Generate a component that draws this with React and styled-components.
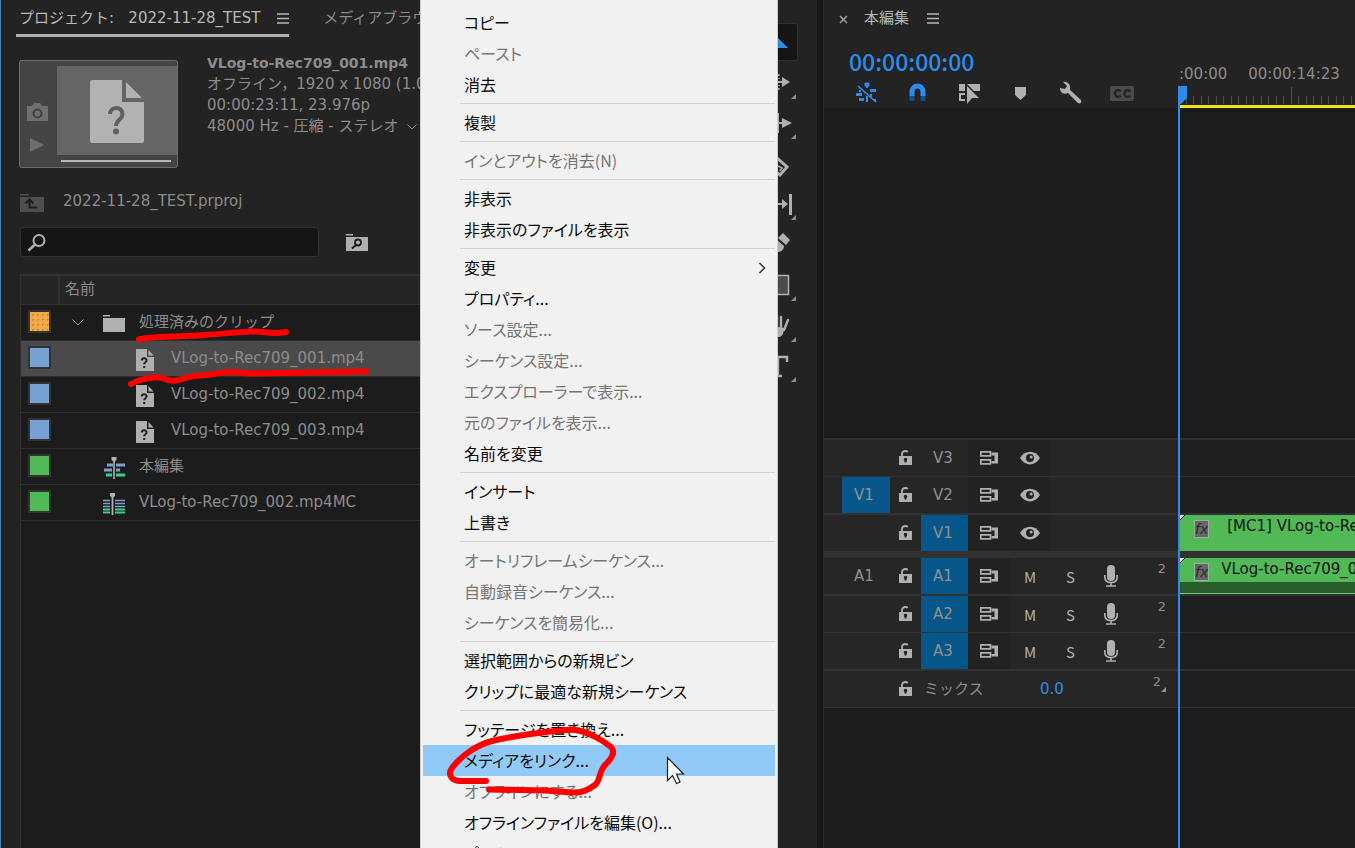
import React from 'react'
import styled, { createGlobalStyle, css } from 'styled-components'

const colors = {
  gutter: '#161616',
  panel: '#232323',
  row: '#262626',
  lane: '#1f1f1f',
  well: '#1c1c1c',
  line: '#313131',
  text: '#8c8c8c',
  bright: '#b8b8b8',
  icon: '#b0b0b0',
  blue: '#2d8ceb',
  target: '#07568a',
  clip: '#52b957',
}

const fonts = {
  body: "'DejaVu Sans', 'Noto Sans CJK JP', sans-serif",
  menu: "'Noto Sans CJK JP', sans-serif",
}

const GlobalStyle = createGlobalStyle`
  * {
    box-sizing: border-box;
  }

  body {
    margin: 0;
    background: ${colors.gutter};
    color: ${colors.text};
    font-family: ${fonts.body};
    font-size: 15px;
    line-height: 21px;
  }

  button {
    margin: 0;
    padding: 0;
    border: 0;
    background: none;
    color: inherit;
    font: inherit;
    text-align: left;
  }

  svg {
    display: block;
    flex: none;
  }
`

const Workspace = styled.div`
  position: relative;
  display: grid;
  grid-template-columns: 754px 57px minmax(0, 1fr);
  gap: 6px;
  height: 100vh;
  overflow: hidden;
`

/* project panel */

const Project = styled.section`
  display: flex;
  flex-direction: column;
  padding-left: 19px;
  border-left: 1px solid #4585b8;
  background: ${colors.panel};
  white-space: nowrap;
`

const ProjectTabs = styled.nav`
  display: flex;
  gap: 31px;
  margin-left: -4px;
  height: 37px;
`

const ProjectTab = styled.button`
  display: flex;
  align-items: center;
  gap: 17px;
  padding: 2px ${(p) => (p.$active ? 0 : 3)}px 0 3px;
  border-bottom: 3px solid ${(p) => (p.$active ? '#b5b0b0' : 'transparent')};
  color: ${(p) => (p.$active ? colors.bright : colors.text)};
`

const Preview = styled.div`
  display: flex;
  gap: 28px;
  padding: 16px 0 0;
  margin-left: -1px;
`

const Thumb = styled.div`
  padding-top: 7px;
`

const ClipInfo = styled.div`
  display: flex;
  flex-direction: column;
`

const ClipName = styled.strong`
  font-size: 14px;
`

const InfoLine = styled.span`
  display: flex;
  align-items: center;
  gap: 8px;
`

const BinPath = styled.div`
  display: flex;
  align-items: center;
  gap: 19px;
  height: 22px;
  margin-top: 22px;

  svg {
    margin-top: 3px;
  }
`

const SearchRow = styled.div`
  display: flex;
  align-items: center;
  gap: 27px;
  margin: 15px 0 17px;
`

const SearchBox = styled.label`
  display: flex;
  align-items: center;
  gap: 8px;
  width: 299px;
  height: 30px;
  padding: 0 6px;
  border: 1px solid #303030;
  border-radius: 3px;
  background: #151515;
`

const SearchInput = styled.input`
  flex: 1;
  min-width: 0;
  border: 0;
  outline: 0;
  background: none;
  color: ${colors.bright};
  font: inherit;
`

const BinTable = styled.table`
  flex: 1;
  display: flex;
  flex-direction: column;
  border: 2px solid ${colors.line};
  border-width: 2px 0 0 1px;
  background: ${colors.well};
`

const HeadRow = styled.tr`
  display: grid;
  grid-template-columns: 39px 1fr;
  height: 29px;
  border-bottom: 1px solid ${colors.line};
  background: #252525;

  th {
    padding: 3px 5px;
    font-weight: 400;
    text-align: left;
  }

  th:first-child {
    border-right: 2px solid ${colors.line};
  }
`

const BinRow = styled.tr`
  display: grid;
  grid-template-columns: 39px 1fr;
  align-items: center;
  height: 36px;
  border-bottom: 1px solid #2d2d2d;
  background: ${(p) => (p.$selected ? '#4a4a4a' : 'none')};

  td {
    padding: 0 0 0 7px;
  }

  td:first-child {
    padding-bottom: 2px;
  }
`

const Swatch = styled.span`
  display: block;
  width: 23px;
  height: 23px;
  border: 2px solid #333;
  background: ${(p) => p.$color};
  ${(p) =>
    p.$dotted &&
    css`
      background-image: radial-gradient(#c98a35 1px, transparent 1px);
      background-size: 5px 5px;
    `}
`

const ItemName = styled.span`
  display: flex;
  align-items: center;
  padding-left: ${(p) => (p.$nested ? 69 : 36)}px;
`

const FolderName = styled(ItemName)`
  padding-left: 5px;
`

const ItemIcon = styled.span`
  width: ${(p) => (p.$nested ? 35 : 36)}px;
  padding-top: 2px;
`

const Twirl = styled.button`
  width: 31px;
`

/* tool strip */

const ToolStrip = styled.aside`
  padding: 24px 0 0;
  background: ${colors.panel};
`

const ToolList = styled.div`
  display: flex;
  flex-direction: column;
  justify-content: space-between;
  height: 360px;
`

const Tool = styled.button`
  width: 37px;
  height: 36px;
  border-radius: 2px;
  background: ${(p) => (p.$active ? '#151515' : 'none')};
  box-shadow: ${(p) => (p.$active ? '0 0 0 1px #2f2f2f' : 'none')};
`

/* timeline */

const Timeline = styled.section`
  position: relative;
  display: flex;
  flex-direction: column;
  border-left: 1px solid #292929;
  background: ${colors.well};
  white-space: nowrap;
`

const TimelineTop = styled.header`
  display: grid;
  grid-template-columns: 354px minmax(0, 1fr);
  height: 108px;
  background: ${colors.panel};
`

const TimelineTab = styled.div`
  display: flex;
  align-items: center;
  height: 37px;
  padding-left: 15px;
  color: ${colors.bright};
`

const SequenceName = styled.span`
  margin: 0 18px 0 15px;
`

const Timecode = styled.div`
  height: 43px;
  padding-left: 25px;
  color: ${colors.blue};
  font-family: ${fonts.menu};
  font-size: 23px;
  font-weight: 500;
  line-height: 48px;
`

const TimelineTools = styled.div`
  display: flex;
  gap: 27px;
  padding: 1px 0 0 31px;
`

const Ruler = styled.div`
  display: flex;
  flex-direction: column;
  justify-content: flex-end;
  overflow: hidden;
`

const RulerLabels = styled.div`
  display: flex;
  gap: 21px;
  padding: 0 0 1px 1px;
`

const WorkArea = styled.div`
  height: 3px;
  background: #eee61e;
`

const EmptyLanes = styled.div`
  height: 330px;
`

const Tracks = styled.div`
  border-top: 2px solid ${colors.line};
`

const Track = styled.div`
  display: grid;
  grid-template-columns: 354px minmax(0, 1fr);
  border-bottom: ${(p) => p.$rule}px solid ${colors.line};
`

const TrackHeader = styled.div`
  display: grid;
  grid-template-columns: 18px 48px 31px 47px 42px 40px 41px 39px 1fr;
  align-items: center;
  height: 36px;
  background: ${colors.row};

  > :first-child {
    grid-column: 2;
  }
`

const MixHeader = styled(TrackHeader)`
  grid-template-columns: 18px 48px 31px 119px 90px 1fr;
`

const Patch = styled.button`
  align-self: stretch;
  padding: 1px 12px 0;
  background: ${(p) => (p.$on ? colors.target : 'none')};
  color: #909090;
`

const TrackButton = styled.button`
  display: flex;
  align-items: center;
  justify-content: center;
  align-self: stretch;
  background: ${(p) => (p.$shaded ? '#222' : 'none')};
  color: ${colors.icon};
  font-family: ${fonts.menu};
`

const Channels = styled.span`
  display: flex;
  align-items: flex-end;
  align-self: start;
  justify-content: flex-end;
  padding: 1px 12px 0 0;
  font-size: 13px;
  line-height: 20px;
`

const MixLabel = styled.span`
  padding-left: 3px;
`

const Volume = styled.button`
  color: ${colors.blue};
`

const Lane = styled.div`
  padding-left: 2px;
  background: ${colors.lane};
  overflow: hidden;
`

const Clip = styled.div`
  display: flex;
  height: 36px;
  background: ${colors.clip};
  border-bottom: ${(p) => (p.$audio ? '1px solid #6fc873' : 0)};
  box-shadow: ${(p) => (p.$audio ? 'inset 0 -11px #285c2b' : 'none')};
  color: #0c130c;
  line-height: 23px;
`

const Fx = styled.button`
  width: 18px;
  height: 18px;
  margin: 5px ${(p) => p.$space}px 0 5px;
  border: 1px solid #9ab09a;
  background: #666;
  color: #2a2a2a;
  font-size: 14px;
  font-style: italic;
  line-height: 15px;
  text-align: center;
`

const Playhead = styled.svg`
  position: absolute;
  top: 86px;
  left: 354px;
`

/* context menu */

const Menu = styled.div`
  position: absolute;
  top: 0;
  left: 420px;
  width: 358px;
  padding: 7px 2px;
  border: 1px solid #cfcfcf;
  border-width: 0 1px;
  background: #f1f1f1;
  color: #0a0a0a;
  font-family: ${fonts.menu};
  font-feature-settings: 'palt';
  font-size: 16px;
  line-height: 31px;
  white-space: nowrap;
`

const MenuItem = styled.button`
  display: flex;
  align-items: center;
  justify-content: space-between;
  width: 100%;
  height: 31px;
  padding: 0 9px 0 41px;
  background: ${(p) => (p.$hover ? '#91c9f7' : 'none')};

  &:disabled {
    color: #757575;
  }
`

const MenuRule = styled.hr`
  height: 1px;
  margin: 3px 0 3px 37px;
  border: 0;
  background: #d3d5d5;
`

const Overlay = styled.svg`
  position: absolute;
  top: 0;
  left: 0;
  pointer-events: none;
`

const MENU = [
  ['コピー'],
  ['ペースト', 'off'],
  ['消去'],
  null,
  ['複製'],
  null,
  ['インとアウトを消去(N)', 'off'],
  null,
  ['非表示'],
  ['非表示のファイルを表示'],
  null,
  ['変更', 'sub'],
  ['プロパティ...'],
  ['ソース設定...', 'off'],
  ['シーケンス設定...', 'off'],
  ['エクスプローラーで表示...', 'off'],
  ['元のファイルを表示...', 'off'],
  ['名前を変更'],
  null,
  ['インサート'],
  ['上書き'],
  null,
  ['オートリフレームシーケンス...', 'off'],
  ['自動録音シーケンス...', 'off'],
  ['シーケンスを簡易化...', 'off'],
  null,
  ['選択範囲からの新規ビン'],
  ['クリップに最適な新規シーケンス'],
  null,
  ['フッテージを置き換え...'],
  ['メディアをリンク...', 'hover'],
  ['オフラインにする...', 'off'],
  ['オフラインファイルを編集(O)...'],
  ['プロキシ'],
]

const ITEMS = [
  { name: 'VLog-to-Rec709_001.mp4', color: '#78a2d3', kind: 'offline', selected: true },
  { name: 'VLog-to-Rec709_002.mp4', color: '#78a2d3', kind: 'offline' },
  { name: 'VLog-to-Rec709_003.mp4', color: '#78a2d3', kind: 'offline' },
  { name: '本編集', color: '#52b957', kind: 'sequence' },
  { name: 'VLog-to-Rec709_002.mp4MC', color: '#52b957', kind: 'multicam' },
]

const VIDEO_TRACKS = [
  { name: 'V3', rule: 1 },
  { name: 'V2', rule: 2, source: 'V1', sourceOn: true },
  { name: 'V1', rule: 7, on: true, clip: '[MC1] VLog-to-Rec709_002.mp4MC [V]' },
]

const AUDIO_TRACKS = [
  { name: 'A1', rule: 2, source: 'A1', on: true, clip: 'VLog-to-Rec709_002.mp4MC [A]' },
  { name: 'A2', rule: 1, on: true },
  { name: 'A3', rule: 2, on: true },
]

const Hamburger = () => (
  <svg width='12' height='11' fill='none' stroke='currentColor' strokeWidth='1.6'>
    <path d='M0 1h12M0 5.5h12M0 10h12' />
  </svg>
)

const OfflineIcon = () => (
  <svg width='18' height='22' viewBox='0 0 18 22'>
    <path d='M0 0h11v8h7v14H0z' fill={colors.icon} />
    <path d='M12.5 1l5 5.5h-5z' fill={colors.icon} />
    <path d='M5.8 11.6c0-3.2 4.8-3 4.8-.3 0 2-2.4 1.8-2.4 4M8.2 17v2' fill='none' stroke='#222' strokeWidth='2' />
  </svg>
)

const SequenceIcon = () => (
  <svg width='23' height='22' viewBox='0 0 23 22'>
    <path d='M4 8h6M13 8h9M1 13h8M13 13h4' stroke='#7b9fca' strokeWidth='3' />
    <path d='M3 18h6M13 18h9' stroke='#37cf92' strokeWidth='3' />
    <path d='M11 2v20' stroke={colors.icon} strokeWidth='1.6' />
    <path d='M8.5 0h5v3l-2.5 2-2.5-2z' fill={colors.icon} />
  </svg>
)

const MulticamIcon = () => (
  <svg width='23' height='22' viewBox='0 0 23 22'>
    <path d='M0 7.5h7M12 7.5h10M0 10.5h7M12 10.5h10M0 13.5h7M12 13.5h10' stroke='#7b9fca' strokeWidth='1.6' />
    <path d='M0 16.5h7M12 16.5h10M0 19.5h7M12 19.5h10' stroke='#37cf92' strokeWidth='2' />
    <path d='M9.5 2v20' stroke={colors.icon} strokeWidth='1.8' />
    <path d='M7 0h5v3L9.5 5 7 3z' fill={colors.icon} />
  </svg>
)

const ICONS = { offline: OfflineIcon, sequence: SequenceIcon, multicam: MulticamIcon }

const FolderIcon = () => (
  <svg width='22' height='17' fill={colors.icon}>
    <path d='M0 0h7v1.500H0zM0 3h22v14H0z' />
  </svg>
)

const LockIcon = () => (
  <svg width='13' height='17' viewBox='0 0 13 17'>
    <path d='M3 7V4C3 2 4.500 1 6.500 1c1 0 1.800.3 2.300.8' fill='none' stroke={colors.icon} strokeWidth='1.8' />
    <path d='M0 6h13v9H0z' fill={colors.icon} />
    <path d='M6.500 8.500v4' stroke='#222' strokeWidth='2' />
    <circle cx='6.500' cy='9.500' r='1.700' fill='#222' />
  </svg>
)

const SyncIcon = () => (
  <svg width='18' height='14' viewBox='0 0 18 14'>
    <g fill='none' stroke={colors.icon} strokeWidth='1.7'>
      <path d='M.8.900h9.700v4H.8zM.8 8.900h9.700v4H.8z' />
    </g>
    <path d='M11.500 1.500H18v11h-6.500V10H14.500V4.500h-3z' fill={colors.icon} />
  </svg>
)

const EyeIcon = () => (
  <svg width='20' height='14' viewBox='0 0 20 14'>
    <path d='M0 7C5-1.500 15-1.500 20 7 15 15.500 5 15.500 0 7z' fill={colors.icon} />
    <circle cx='10' cy='7' r='4' fill='#232323' />
    <circle cx='11.200' cy='6' r='1.500' fill={colors.icon} />
  </svg>
)

const MicIcon = () => (
  <svg width='14' height='22' viewBox='0 0 14 22'>
    <rect x='3' y='0' width='8' height='16' rx='4' fill={colors.icon} />
    <path d='M.8 10v2c0 3.600 2.500 5.600 6.200 5.600s6.200-2 6.200-5.600v-2M7 18v2.500M2 21h10' fill='none' stroke={colors.icon} strokeWidth='1.6' />
  </svg>
)

const Thumbnail = () => (
  <svg width='160' height='108' viewBox='0 0 160 108'>
    <rect x='.5' y='.5' width='158' height='107' rx='2' fill='#444' stroke='#6c6c6c' />
    <path d='M38 6h120v89H38z' fill='#656565' />
    <path d='M42 101h110' stroke='#b5b5b5' strokeWidth='2' />
    <path d='M73 20h30v22h22v39a2 2 0 0 1-2 2H73a2 2 0 0 1-2-2V22a2 2 0 0 1 2-2z' fill='#b2b2b2' />
    <path d='M107 22l16 16h-16z' fill='#b2b2b2' />
    <path d='M91 54c0-8 13-8 12.500.5 0 5-6.500 5-6.500 11.500' fill='none' stroke='#606060' strokeWidth='4' />
    <circle cx='97' cy='71.500' r='3' fill='#606060' />
    <path d='M8 46h5l2-3h6l2 3h6v15H8z' fill='#6f6f6f' />
    <circle cx='18.500' cy='53.500' r='4' fill='none' stroke='#404040' strokeWidth='2' />
    <path d='M11 78l14 7-14 7z' fill='#6f6f6f' />
  </svg>
)

const Corner = () => <path d='M36 29v5h-5z' fill='#8f8f8f' />

const TOOLS = [
  ['選択ツール', <path d='M10 6l18 18H18l-8 8z' fill={colors.blue} />],
  [
    'トラックの前方選択ツール',
    <>
      <path d='M12 10h7v4M12 24h7v-4' fill='none' stroke={colors.icon} strokeWidth='1.500' strokeDasharray='3 2' />
      <path d='M14 17h9' stroke={colors.icon} strokeWidth='2' />
      <path d='M22 12l8 5-8 5z' fill={colors.icon} />
      <Corner />
    </>,
  ],
  [
    'リップルツール',
    <>
      <path d='M18 8v20M18 18h6' stroke={colors.icon} strokeWidth='2' />
      <path d='M22 13l10 5-10 5z' fill={colors.icon} />
      <Corner />
    </>,
  ],
  [
    'レーザーツール',
    <>
      <path d='M8 20l9-8 10 9-7 8z' fill='none' stroke={colors.icon} strokeWidth='3' />
      <path d='M18 20l4 2-2 3' fill='none' stroke={colors.icon} strokeWidth='1.500' />
    </>,
  ],
  [
    'スリップツール',
    <>
      <path d='M14 18h9' stroke={colors.icon} strokeWidth='2' />
      <path d='M22 13l6 5-6 5z' fill={colors.icon} />
      <path d='M30.500 8v21' stroke={colors.icon} strokeWidth='3' />
      <Corner />
    </>,
  ],
  [
    'ペンツール',
    <>
      <path d='M23 6l7 7-4 5-8-7z' fill={colors.icon} />
      <path d='M16 12l8 7c0 4-3 6-10 7z' fill={colors.icon} />
    </>,
  ],
  [
    '長方形ツール',
    <>
      <rect x='8.500' y='8.500' width='20' height='19' fill='#4b4b4b' stroke={colors.icon} strokeWidth='1.500' />
      <Corner />
    </>,
  ],
  [
    '手のひらツール',
    <>
      <path d='M21 20V9M24 22l4-10M17 20V8' stroke={colors.icon} strokeWidth='2.400' strokeLinecap='round' />
      <path d='M12 18l12 2c0 5-2 9-5 9h-4z' fill={colors.icon} />
      <Corner />
    </>,
  ],
  [
    '横書き文字ツール',
    <>
      <path d='M8 13V9h19v5M18 9v18M14 28h8' fill='none' stroke={colors.icon} strokeWidth='2.400' />
      <Corner />
    </>,
  ],
]

function ProjectPanel() {
  return (
    <Project>
      <ProjectTabs>
        <ProjectTab $active>
          プロジェクト:&nbsp;&nbsp; 2022-11-28_TEST
          <Hamburger />
        </ProjectTab>
        <ProjectTab>メディアブラウザー</ProjectTab>
      </ProjectTabs>
      <Preview>
        <Thumb>
          <Thumbnail />
        </Thumb>
        <ClipInfo>
          <ClipName>VLog-to-Rec709_001.mp4</ClipName>
          <InfoLine>オフライン，1920 x 1080 (1.0)</InfoLine>
          <InfoLine>00:00:23:11, 23.976p</InfoLine>
          <InfoLine>
            48000 Hz - 圧縮 - ステレオ
            <svg width='10' height='6' fill='none' stroke='currentColor'>
              <path d='M.5.500L5 5 9.500.5' />
            </svg>
          </InfoLine>
        </ClipInfo>
      </Preview>
      <BinPath>
        <svg width='24' height='19' viewBox='0 0 24 19'>
          <path d='M0 1h9v1.500H0zM0 4h24v15H0z' fill='#4e4e4e' />
          <path d='M9.500 7v7.500H17M5.500 10.500l4-4 4 4' fill='none' stroke='#1e1e1e' strokeWidth='2' />
        </svg>
        2022-11-28_TEST.prproj
      </BinPath>
      <SearchRow>
        <SearchBox>
          <svg width='19' height='19' fill='none' stroke={colors.icon}>
            <circle cx='12' cy='7.500' r='5.500' strokeWidth='2' />
            <path d='M8 11.500L1.500 17.500' strokeWidth='2.500' />
          </svg>
          <SearchInput aria-label='検索' />
        </SearchBox>
        <button aria-label='ビンを検索'>
          <svg width='22' height='17' viewBox='0 0 22 17'>
            <path d='M0 0h7v1.500H0zM0 3h22v14H0z' fill={colors.icon} />
            <circle cx='12' cy='8.500' r='3' fill='none' stroke='#1c1c1c' strokeWidth='1.800' />
            <path d='M10 11l-4 3.500' stroke='#1c1c1c' strokeWidth='2' />
          </svg>
        </button>
      </SearchRow>
      <BinTable>
        <thead>
          <HeadRow>
            <th aria-label='ラベル' />
            <th>名前</th>
          </HeadRow>
        </thead>
        <tbody>
          <BinRow>
            <td>
              <Swatch $color='#f0a848' $dotted />
            </td>
            <td>
              <FolderName>
                <Twirl aria-label='開閉'>
                  <svg width='12' height='7' fill='none' stroke='#a0a0a0'>
                    <path d='M.5.500L6 6 11.500.5' />
                  </svg>
                </Twirl>
                <ItemIcon>
                  <FolderIcon />
                </ItemIcon>
                処理済みのクリップ
              </FolderName>
            </td>
          </BinRow>
          {ITEMS.map(({ name, color, kind, selected }) => {
            const Icon = ICONS[kind]
            const nested = kind === 'offline'
            return (
              <BinRow key={name} $selected={selected}>
                <td>
                  <Swatch $color={color} />
                </td>
                <td>
                  <ItemName $nested={nested}>
                    <ItemIcon $nested={nested}>
                      <Icon />
                    </ItemIcon>
                    {name}
                  </ItemName>
                </td>
              </BinRow>
            )
          })}
        </tbody>
      </BinTable>
    </Project>
  )
}

function TrackRow({ track, audio }) {
  const { name, rule, source, sourceOn, on, clip } = track
  return (
    <Track $rule={rule}>
      <TrackHeader>
        <Patch $on={sourceOn}>{source}</Patch>
        <TrackButton aria-label='ロック'>
          <LockIcon />
        </TrackButton>
        <Patch $on={on}>{name}</Patch>
        <TrackButton $shaded aria-label='同期ロック'>
          <SyncIcon />
        </TrackButton>
        {audio ? (
          <>
            <TrackButton>M</TrackButton>
            <TrackButton>S</TrackButton>
            <TrackButton aria-label='ボイスオーバー'>
              <MicIcon />
            </TrackButton>
            <Channels>2</Channels>
          </>
        ) : (
          <TrackButton $shaded aria-label='トラック出力'>
            <EyeIcon />
          </TrackButton>
        )}
      </TrackHeader>
      <Lane>
        {clip && (
          <Clip $audio={audio}>
            <svg width='9' height='6'>
              <path d='M0 0h5L0 5z' fill='#dcdcdc' />
              <path d='M5 0L0 5' stroke='#222' />
            </svg>
            <Fx $space={audio ? 12 : 18}>fx</Fx>
            {clip}
          </Clip>
        )}
      </Lane>
    </Track>
  )
}

function TimelinePanel() {
  return (
    <Timeline>
      <TimelineTop>
        <div>
          <TimelineTab>
            <button aria-label='閉じる'>
              <svg width='10' height='10' stroke='#a0a0a0' strokeWidth='1.500'>
                <path d='M1 2l7 7M8 2L1 9' />
              </svg>
            </button>
            <SequenceName>本編集</SequenceName>
            <Hamburger />
          </TimelineTab>
          <Timecode>00:00:00:00</Timecode>
          <TimelineTools>
            <svg width='24' height='24' viewBox='0 0 24 24' stroke={colors.blue} fill='none'>
              <path d='M12 2v5M12 15v6' strokeWidth='2' />
              <path d='M10 2h4v3h-4z' fill={colors.blue} />
              <path d='M15 9.500h6M1 13.500h6M4 18.500h5M15 14.500h2' strokeWidth='3' />
              <path d='M3 5l18 16' strokeWidth='1.600' />
              <path d='M4 10h2M18 19h3' strokeWidth='2' />
            </svg>
            <svg width='24' height='24' viewBox='0 0 24 24' fill='none' strokeWidth='5'>
              <path d='M6 15v-4c0-8 11-8 11 0v4' stroke={colors.blue} />
              <path d='M6 15v5M17 15v5' stroke='#174f86' />
            </svg>
            <svg width='24' height='24' viewBox='0 0 24 24'>
              <path d='M2 3h6v7H2zM10 3h13v7h-6l-7-7z' fill={colors.icon} />
              <path d='M8 13H3v6h5' fill='none' stroke={colors.icon} strokeWidth='2' />
              <path d='M10 5l12 12h-7l-5 6z' fill={colors.icon} />
            </svg>
            <svg width='24' height='24' viewBox='0 0 24 24'>
              <path d='M7 6h11v8l-5.500 5L7 14z' fill={colors.icon} />
            </svg>
            <svg width='24' height='24' viewBox='0 0 24 24'>
              <path d='M4 1c5-1 8 3 7 8l11 10c1 3-1 4-3 3L9 12c-5 2-8-1-8-5l5 1 2-3z' fill={colors.icon} />
            </svg>
            <svg width='24' height='24' viewBox='0 0 24 24' fill='none'>
              <rect x='0' y='5' width='24' height='15' rx='2' fill='#4b4b4b' />
              <path d='M10.800 10.500a3.300 3.300 0 1 0 0 4M20.300 10.500a3.300 3.300 0 1 0 0 4' stroke='#232323' strokeWidth='2.400' />
            </svg>
          </TimelineTools>
        </div>
        <Ruler>
          <RulerLabels>
            <span>:00:00</span>
            <span>00:00:14:23</span>
          </RulerLabels>
          <svg width='100%' height='19' stroke='#4e4e4e'>
            {Array.from({ length: 160 }, (_, i) => {
              const x = Math.round(i * 7.5) + 0.5
              return <path key={i} d={i % 15 ? `M${x} 10v8` : `M${x} 1v17`} />
            })}
          </svg>
          <WorkArea />
        </Ruler>
      </TimelineTop>
      <EmptyLanes />
      <Tracks>
        {VIDEO_TRACKS.map((track) => (
          <TrackRow key={track.name} track={track} />
        ))}
        {AUDIO_TRACKS.map((track) => (
          <TrackRow key={track.name} track={track} audio />
        ))}
        <Track $rule={1}>
          <MixHeader>
            <span />
            <TrackButton aria-label='ロック'>
              <LockIcon />
            </TrackButton>
            <MixLabel>ミックス</MixLabel>
            <Volume>0.0</Volume>
            <Channels>
              2
              <svg width='5' height='6' fill='#8f8f8f'>
                <path d='M5 1v5H0z' />
              </svg>
            </Channels>
          </MixHeader>
          <Lane />
        </Track>
      </Tracks>
      <Playhead width='10' height='100%' fill={colors.blue}>
        <path d='M0 0h9v12l-6 6H0z' />
        <rect width='2' height='100%' />
      </Playhead>
    </Timeline>
  )
}

function ContextMenu() {
  return (
    <Menu>
      {MENU.map((item, i) => {
        if (!item) return <MenuRule key={i} />
        const [label, state] = item
        return (
          <MenuItem key={label} disabled={state === 'off'} $hover={state === 'hover'}>
            {label}
            {state === 'sub' && (
              <svg width='8' height='12' fill='none' stroke='#333' strokeWidth='1.500'>
                <path d='M1.500 1L6.500 6l-5 5' />
              </svg>
            )}
          </MenuItem>
        )
      })}
    </Menu>
  )
}

export default function App() {
  return (
    <>
      <GlobalStyle />
      <Workspace>
        <ProjectPanel />
        <ToolStrip>
          <ToolList>
            {TOOLS.map(([label, shape], i) => (
              <Tool key={label} $active={i === 0} aria-label={label}>
                <svg width='37' height='36'>
                  {shape}
                </svg>
              </Tool>
            ))}
          </ToolList>
        </ToolStrip>
        <TimelinePanel />
        <ContextMenu />
        <Overlay width='778' height='848'>
          <g fill='none' stroke='#fe0000' strokeWidth='6' strokeLinecap='round' strokeLinejoin='round'>
            <path d='M139 339.500C146 336 180 337 205 335S240 332 252 331.500 272 335 286 332' />
            <path d='M131 384C140 379 152 377 159 377.500S167 382 176 380.500 187 376 200 375.500 220 372 231 372 243 374 255 373.500L366 371.500' />
            <path d='M486 781H459C450 780 448 773 452 768 460 757 476 745 492 741 518 735 540 732 572 729.500 588 731 604 741 611 747 616 752 612 758 606 764 598 772 601 780 595 785 588 790 582 793 572 792.500L545 790.500 489 789.500' />
          </g>
          <path d='M667.500 757.500v23l5-5 4 8 3.500-1.500-3.500-8h7z' fill='#fff' stroke='#1a2433' strokeWidth='1.200' />
        </Overlay>
      </Workspace>
    </>
  )
}
